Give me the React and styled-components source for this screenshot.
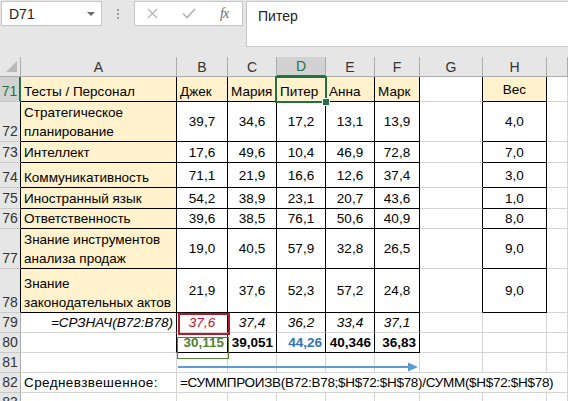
import React from 'react';
import styled, { createGlobalStyle } from 'styled-components';

const GlobalStyle = createGlobalStyle`
  html, body { margin: 0; padding: 0; background: #fff; }
  body { font-family: "Liberation Sans", Arial, sans-serif; overflow: hidden; }
`;

const GREEN = '#217346';
const GRID = '#d4d4d4';
const CREAM = '#fff2cc';

const Window = styled.div`
  width: 568px;
  height: 401px;
  overflow: hidden;
  display: flex;
  flex-direction: column;
  background: #fff;
`;

const TopBar = styled.div`
  height: 57px;
  flex: none;
  box-sizing: border-box;
  background: #e6e6e6;
  display: flex;
  align-items: flex-start;
  padding: 1px 0 0 1px;
`;

const NameBox = styled.div`
  width: 101px;
  height: 25px;
  box-sizing: border-box;
  background: #fff;
  border: 1px solid #c6c6c6;
  display: flex;
  align-items: center;
  justify-content: space-between;
  padding: 0 6px 0 7px;
  font-family: "Liberation Sans", Arial, sans-serif;
  font-size: 14px;
  color: #222;
`;

const Caret = styled.span`
  width: 0;
  height: 0;
  border-left: 4px solid transparent;
  border-right: 4px solid transparent;
  border-top: 4px solid #6a6a6a;
`;

const Dots = styled.div`
  width: 32px;
  height: 25px;
  display: flex;
  flex-direction: column;
  align-items: center;
  justify-content: center;
  gap: 2px;
  span { width: 2px; height: 2px; background: #a0a0a0; }
`;

const FuncBox = styled.div`
  width: 109px;
  height: 25px;
  box-sizing: border-box;
  background: #fff;
  border: 1px solid #c6c6c6;
  display: flex;
  align-items: center;
  padding: 0 0 0 12px;
  gap: 24px;
  margin-right: 3px;
`;

const Fx = styled.span`
  font-family: "Liberation Serif", "Times New Roman", serif;
  font-style: italic;
  font-size: 14px;
  color: #6b6b6b;
  letter-spacing: -1px;
`;

const FormulaInput = styled.div`
  flex: 1;
  height: 46px;
  box-sizing: border-box;
  background: #fff;
  border: 1px solid #c6c6c6;
  border-right: none;
  padding: 6px 0 0 11px;
  font-size: 14px;
  color: #222;
`;

const Sheet = styled.div`
  position: relative;
  display: grid;
  grid-template-columns: 21px 156px 51px 49px 49px 49px 45px 63px 64px 21px;
  grid-template-rows: 20px 25px 40px 21px 25px 21px 20px 40px 44px 20px 20px 20px 20px 20px;
  font-size: 13.5px;
  color: #000;
`;

const ColHead = styled.div`
  box-sizing: border-box;
  background: ${p => (p.$sel ? '#d2d2d2' : '#e6e6e6')};
  color: ${p => (p.$sel ? GREEN : '#333')};
  border-right: 1px solid #ababab;
  border-bottom: ${p => (p.$sel ? `2px solid ${GREEN}` : '1px solid #ababab')};
  display: flex;
  align-items: center;
  justify-content: center;
  font-size: 14px;
`;

const Corner = styled.div`
  box-sizing: border-box;
  background: #e6e6e6;
  border-right: 1px solid #ababab;
  border-bottom: 1px solid #ababab;
  display: flex;
  align-items: flex-end;
  justify-content: flex-end;
  padding: 0 3px 4px 0;
`;

const CornerTri = styled.span`
  width: 0;
  height: 0;
  border-left: 11px solid transparent;
  border-bottom: 11px solid #b9b9b9;
`;

const RowHead = styled.div`
  box-sizing: border-box;
  background: ${p => (p.$sel ? '#d2d2d2' : '#e6e6e6')};
  color: ${p => (p.$sel ? GREEN : '#333')};
  border-right: ${p => p.$right};
  border-bottom: 1px solid #c8c8c8;
  display: flex;
  align-items: flex-end;
  justify-content: center;
  padding-bottom: 1px;
  line-height: 18px;
  font-size: 14px;
`;

const Cell = styled.div`
  box-sizing: border-box;
  grid-column: ${p => (p.$span ? `span ${p.$span}` : 'auto')};
  background: ${p => p.$fill || 'transparent'};
  border-right: 1px solid ${p => p.$br};
  border-bottom: 1px solid ${p => p.$bb};
  display: flex;
  flex-direction: column;
  justify-content: ${p => (p.$valign === 'center' ? 'center' : 'flex-end')};
  align-items: ${p => (p.$align === 'center' ? 'center' : p.$align === 'right' ? 'flex-end' : 'flex-start')};
  padding: 0 3px 0 3px;
  line-height: 19px;
  white-space: nowrap;
  overflow: visible;
  letter-spacing: ${p => p.$spacing || 'normal'};
  font-style: ${p => (p.$italic ? 'italic' : 'normal')};
  font-weight: ${p => (p.$bold ? 700 : 400)};
  color: ${p => p.$color || '#000'};
`;

const SelBox = styled.div`
  position: absolute;
  left: 275px;
  top: 19px;
  width: 52px;
  height: 27px;
  box-sizing: border-box;
  border: 2px solid ${GREEN};
  pointer-events: none;
`;

const SelHandle = styled.div`
  position: absolute;
  right: -5px;
  bottom: -5px;
  width: 6px;
  height: 6px;
  background: ${GREEN};
  border: 1px solid #fff;
`;

const NoteBox = styled.div`
  position: absolute;
  left: ${p => p.$x}px;
  top: ${p => p.$y}px;
  width: ${p => p.$w}px;
  height: ${p => p.$h}px;
  box-sizing: border-box;
  border: ${p => p.$b};
  pointer-events: none;
`;

const Arrow = styled.svg`
  position: absolute;
  left: 178px;
  top: 304px;
`;

const COLS = ['A', 'B', 'C', 'D', 'E', 'F', 'G', 'H', 'I'];
const ROWS = [71, 72, 73, 74, 75, 76, 77, 78, 79, 80, 81, 82, 83];

const data = {
  71: { A: 'Тесты / Персонал', B: 'Джек', C: 'Мария', D: 'Питер', E: 'Анна', F: 'Марк', H: 'Вес' },
  72: { A: ['Стратегическое', 'планирование'], B: '39,7', C: '34,6', D: '17,2', E: '13,1', F: '13,9', H: '4,0' },
  73: { A: 'Интеллект', B: '17,6', C: '49,6', D: '10,4', E: '46,9', F: '72,8', H: '7,0' },
  74: { A: 'Коммуникативность', B: '71,1', C: '21,9', D: '16,6', E: '12,6', F: '37,4', H: '3,0' },
  75: { A: 'Иностранный язык', B: '54,2', C: '38,9', D: '23,1', E: '20,7', F: '43,6', H: '1,0' },
  76: { A: 'Ответственность', B: '39,6', C: '38,5', D: '76,1', E: '50,6', F: '40,9', H: '8,0' },
  77: { A: ['Знание инструментов', 'анализа продаж'], B: '19,0', C: '40,5', D: '57,9', E: '32,8', F: '26,5', H: '9,0' },
  78: { A: ['Знание', 'законодательных актов'], B: '21,9', C: '37,6', D: '52,3', E: '57,2', F: '24,8', H: '9,0' },
  79: { A: '=СРЗНАЧ(B72:B78)', B: '37,6', C: '37,4', D: '36,2', E: '33,4', F: '37,1' },
  80: { B: '30,115', C: '39,051', D: '44,26', E: '40,346', F: '36,83' },
  82: { A: 'Средневзвешенное:', B: '=СУММПРОИЗВ(B72:B78;$H$72:$H$78)/СУММ($H$72:$H$78)' },
};

const inBox = (r, c) => r >= 71 && r <= 78 && ((c >= 1 && c <= 6) || c === 8);
const rightBlack = (r, c) => inBox(r, c) || inBox(r, c + 1) || (r >= 79 && r <= 80 && c >= 1 && c <= 6);
const bottomBlack = (r, c) => inBox(r, c) || inBox(r + 1, c) || (r === 80 && c >= 2 && c <= 6);

function cellProps(r, c) {
  const p = { $align: 'center', $valign: 'center' };
  if (c === 1) { p.$align = 'left'; p.$valign = 'bottom'; }
  if (r === 71 && c >= 2 && c <= 6) { p.$align = 'left'; p.$valign = 'bottom'; }
  if (r >= 71 && r <= 78 && c === 1) p.$fill = CREAM;
  if (r === 71 && ((c >= 2 && c <= 6) || c === 8)) p.$fill = CREAM;
  if (r === 79) {
    p.$italic = true;
    if (c === 1) { p.$align = 'right'; p.$valign = 'bottom'; }
    if (c === 2) p.$color = '#c8102e';
  }
  if (r === 80) {
    p.$bold = true;
    p.$align = 'right';
    if (c === 2) p.$color = '#548235';
    if (c === 4) p.$color = '#2e75b6';
  }
  if (r === 82) { p.$align = 'left'; p.$valign = 'bottom'; }
  if (r === 82 && c === 1) p.$spacing = '0.4px';
  if (r === 82 && c === 2) p.$spacing = '-0.3px';
  return p;
}

function CrossIcon() {
  return (
    <svg width="11" height="11" viewBox="0 0 11 11">
      <path d="M1 1 L10 10 M10 1 L1 10" stroke="#b4b4b4" strokeWidth="1.3" fill="none" />
    </svg>
  );
}

function CheckIcon() {
  return (
    <svg width="14" height="11" viewBox="0 0 14 11">
      <path d="M1 5.5 L5 9.5 L13 1" stroke="#b4b4b4" strokeWidth="1.6" fill="none" />
    </svg>
  );
}

export default function App() {
  const cells = [];
  cells.push(<Corner key="corner"><CornerTri /></Corner>);
  COLS.forEach(col => {
    cells.push(<ColHead key={`h${col}`} $sel={col === 'D'}>{col === 'I' ? '' : col}</ColHead>);
  });
  ROWS.forEach(r => {
    const right = r === 71 ? `2px solid ${GREEN}` : r >= 72 && r <= 78 ? '1px solid #000' : '1px solid #ababab';
    cells.push(<RowHead key={`r${r}`} $sel={r === 71} $right={right}>{r}</RowHead>);
    for (let c = 1; c <= 9; c++) {
      const col = COLS[c - 1];
      const v = data[r] && data[r][col];
      const p = cellProps(r, c);
      const span = r === 82 && c === 2 ? 8 : undefined;
      cells.push(
        <Cell
          key={`${r}${col}`}
          {...p}
          $span={span}
          $br={rightBlack(r, c) ? '#000' : GRID}
          $bb={bottomBlack(r, c) ? '#000' : GRID}
        >
          {Array.isArray(v) ? v.map(l => <span key={l}>{l}</span>) : v}
        </Cell>
      );
      if (span) c += span - 1;
    }
  });

  return (
    <Window>
      <GlobalStyle />
      <TopBar>
        <NameBox>D71<Caret /></NameBox>
        <Dots><span /><span /><span /></Dots>
        <FuncBox>
          <CrossIcon />
          <CheckIcon />
          <Fx>fx</Fx>
        </FuncBox>
        <FormulaInput>Питер</FormulaInput>
      </TopBar>
      <Sheet>
        {cells}
        <SelBox><SelHandle /></SelBox>
        <NoteBox $x={178} $y={256} $w={52} $h={22} $b="2px solid #b01c2e" />
        <NoteBox $x={177} $y={280} $w={52} $h={22} $b="1.5px solid #548235" />
        <Arrow width="242" height="12" viewBox="0 0 242 12">
          <path d="M0 6 L232 6" stroke="#5b9bd5" strokeWidth="2.2" fill="none" />
          <path d="M230 1.5 L240 6 L230 10.5 Z" fill="#5b9bd5" />
        </Arrow>
      </Sheet>
    </Window>
  );
}
